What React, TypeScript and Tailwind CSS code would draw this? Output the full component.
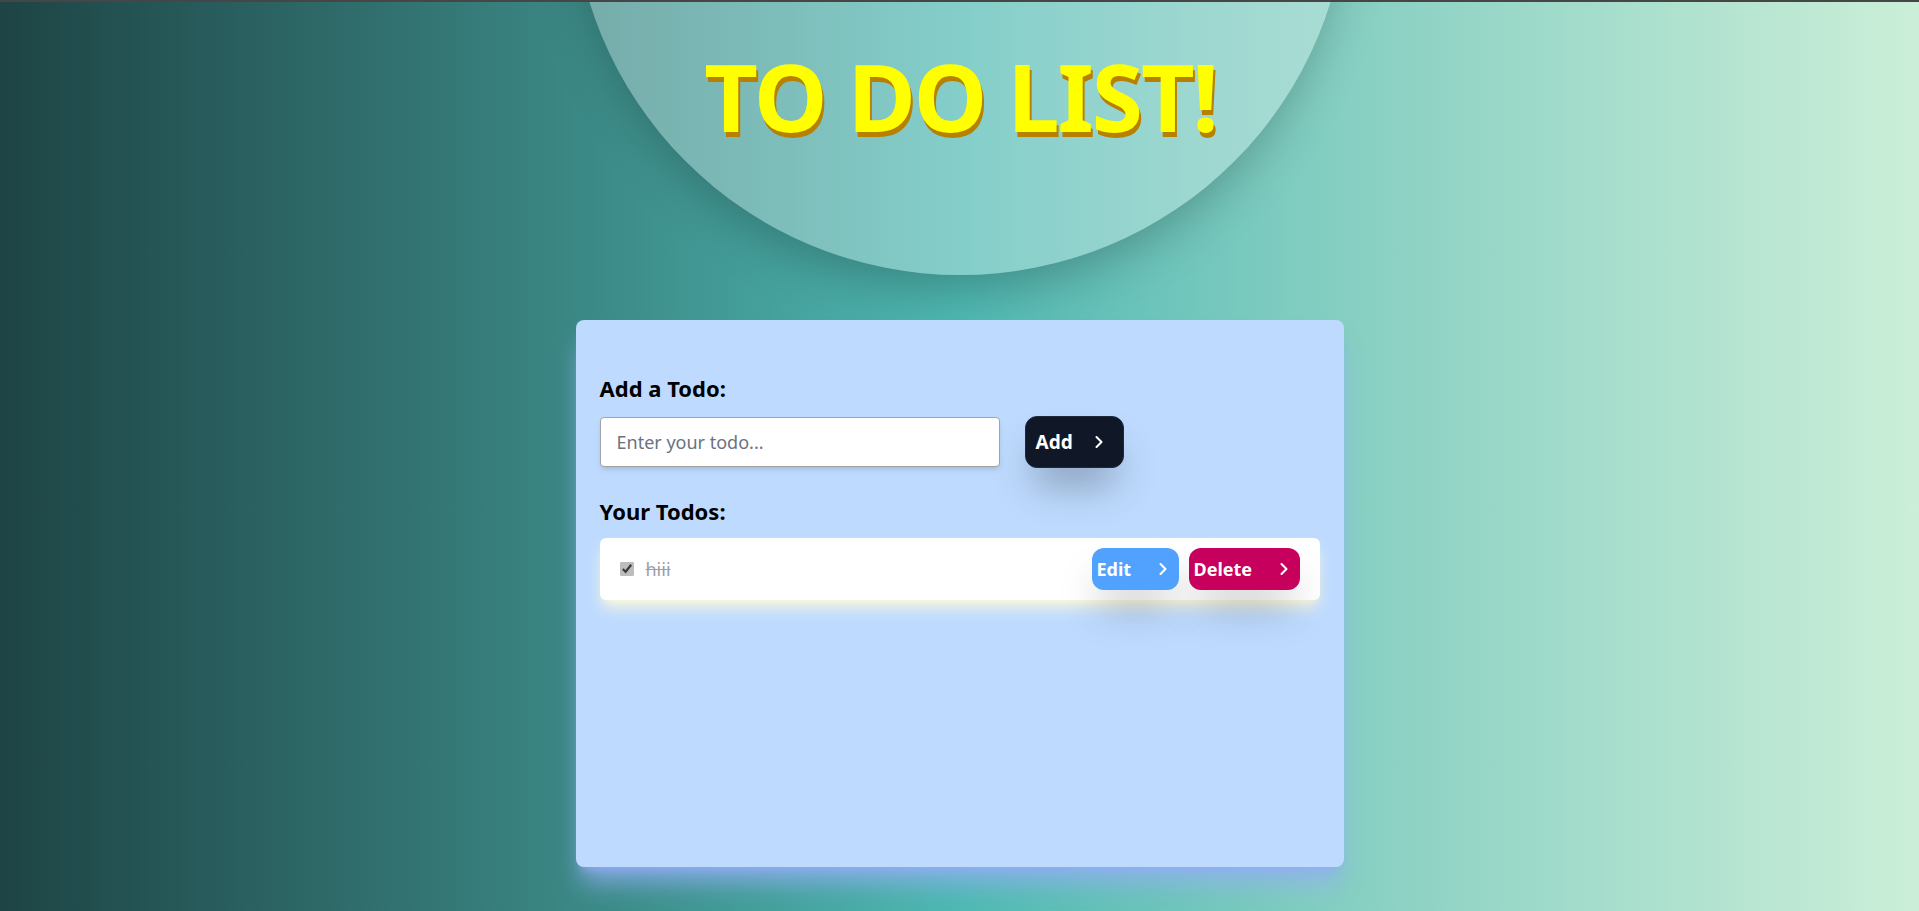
import React, { useState } from 'react';
import { ChevronRight } from 'lucide-react';

interface Todo {
  id: number;
  text: string;
  done: boolean;
}

const font = { fontFamily: '"Noto Sans", "Open Sans", Arial, sans-serif' };

export default function App() {
  const [todo, setTodo] = useState<string>('');
  const [todos, setTodos] = useState<Todo[]>([{ id: 1, text: 'hiii', done: true }]);

  const handleAdd = () => {
    if (!todo.trim()) return;
    setTodos([...todos, { id: Date.now(), text: todo, done: false }]);
    setTodo('');
  };

  const handleToggle = (id: number) => {
    setTodos(todos.map((t) => (t.id === id ? { ...t, done: !t.done } : t)));
  };

  const handleEdit = (id: number) => {
    const t = todos.find((i) => i.id === id);
    if (!t) return;
    setTodo(t.text);
    setTodos(todos.filter((i) => i.id !== id));
  };

  const handleDelete = (id: number) => {
    setTodos(todos.filter((t) => t.id !== id));
  };

  return (
    <div
      style={font}
      className="relative h-screen overflow-hidden border-t-2 border-[#464646] bg-gradient-to-r from-[#1e4445] via-[#4fb9b3] to-[#cbefd8]"
    >
      {/* decorative circle behind the title */}
      <div className="absolute left-1/2 top-[-503px] h-[776px] w-[776px] -translate-x-1/2 rounded-full bg-white/30 shadow-2xl" />

      <div className="relative flex flex-col items-center">
        <h1 className="mt-[48px] pl-[2px] text-[93px] font-bold leading-none tracking-[-2px] text-[#ffff00] [text-shadow:2px_5px_0_#b88000]">
          TO DO LIST!
        </h1>

        <div className="mt-[177px] h-[547px] w-[768px] rounded-lg bg-[#bedbff] px-6 pt-[54px] shadow-xl shadow-[#93aef5]/80">
          <h2 className="text-[22px] font-bold leading-7 text-black">Add a Todo:</h2>
          <div className="mt-[14px] flex items-center">
            <input
              type="text"
              value={todo}
              onChange={(e) => setTodo(e.target.value)}
              placeholder="Enter your todo..."
              className="h-[50px] w-[400px] rounded border border-[#a3a3a3] bg-white px-4 text-lg text-gray-800 shadow-md outline-none placeholder:text-gray-500"
            />
            <button
              onClick={handleAdd}
              className="ml-[25px] flex h-[52px] w-[99px] items-center rounded-xl border border-[#1e2939] bg-[#101828] pl-[10px] text-[19px] font-bold text-white shadow-[0_25px_40px_-8px_rgba(0,0,0,0.3)]"
            >
              Add
              <ChevronRight className="ml-[16px] h-5 w-5" strokeWidth={2.5} />
            </button>
          </div>

          <h2 className="mt-[29px] text-[22px] font-bold leading-7 text-black">Your Todos:</h2>
          <div className="mt-[13px] flex flex-col gap-3">
            {todos.map((t) => (
              <div
                key={t.id}
                className="flex h-[62px] items-center rounded-md bg-white px-5 shadow-lg shadow-[#fbf8dc]"
              >
                <input
                  type="checkbox"
                  checked={t.done}
                  onChange={() => handleToggle(t.id)}
                  className="h-[14px] w-[14px] accent-[#bdbdbd]"
                />
                <span className={`ml-[12px] text-lg ${t.done ? 'text-gray-400 line-through' : 'text-gray-800'}`}>
                  {t.text}
                </span>
                <div className="ml-auto flex items-center gap-[10px]">
                  <button
                    onClick={() => handleEdit(t.id)}
                    className="flex h-[42px] w-[87px] items-center rounded-xl bg-[#51a2ff] pl-[5px] text-lg font-bold text-white shadow-[0_25px_40px_-8px_rgba(0,0,0,0.25)]"
                  >
                    Edit
                    <ChevronRight className="ml-auto mr-[6px] h-5 w-5" strokeWidth={2.5} />
                  </button>
                  <button
                    onClick={() => handleDelete(t.id)}
                    className="flex h-[42px] w-[111px] items-center rounded-xl bg-[#c6005c] pl-[5px] text-lg font-bold text-white shadow-[0_25px_40px_-8px_rgba(0,0,0,0.25)]"
                  >
                    Delete
                    <ChevronRight className="ml-auto mr-[6px] h-5 w-5" strokeWidth={2.5} />
                  </button>
                </div>
              </div>
            ))}
          </div>
        </div>
      </div>
    </div>
  );
}
